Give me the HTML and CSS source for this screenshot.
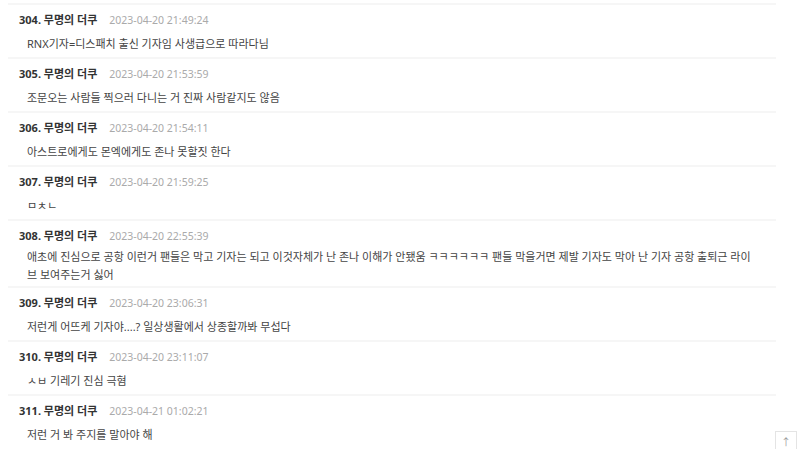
FILE: index.html
```html
<!DOCTYPE html>
<html lang="ko">
<head>
    <meta charset="UTF-8">
    <meta name="viewport" content="width=device-width, initial-scale=1.0">
    <title>댓글</title>
    <link rel="stylesheet" href="styles.css">
</head>
<body>
    <div class="comments">
        <div class="comment">
            <div class="comment-head"><span class="nick">304. 무명의 더쿠</span><span class="date">2023-04-20 21:49:24</span></div>
            <div class="comment-body">RNX기자=디스패치 출신 기자임 사생급으로 따라다님</div>
        </div>
        <div class="comment">
            <div class="comment-head"><span class="nick">305. 무명의 더쿠</span><span class="date">2023-04-20 21:53:59</span></div>
            <div class="comment-body">조문오는 사람들 찍으러 다니는 거 진짜 사람같지도 않음</div>
        </div>
        <div class="comment">
            <div class="comment-head"><span class="nick">306. 무명의 더쿠</span><span class="date">2023-04-20 21:54:11</span></div>
            <div class="comment-body">아스트로에게도 몬엑에게도 존나 못할짓 한다</div>
        </div>
        <div class="comment">
            <div class="comment-head"><span class="nick">307. 무명의 더쿠</span><span class="date">2023-04-20 21:59:25</span></div>
            <div class="comment-body">ㅁㅊㄴ</div>
        </div>
        <div class="comment">
            <div class="comment-head"><span class="nick">308. 무명의 더쿠</span><span class="date">2023-04-20 22:55:39</span></div>
            <div class="comment-body">애초에 진심으로 공항 이런거 팬들은 막고 기자는 되고 이것자체가 난 존나 이해가 안됐움 ㅋㅋㅋㅋㅋㅋ 팬들 막을거면 제발 기자도 막아 난 기자 공항 출퇴근 라이브 보여주는거 싫어</div>
        </div>
        <div class="comment">
            <div class="comment-head"><span class="nick">309. 무명의 더쿠</span><span class="date">2023-04-20 23:06:31</span></div>
            <div class="comment-body">저런게 어뜨케 기자야....? 일상생활에서 상종할까봐 무섭다</div>
        </div>
        <div class="comment">
            <div class="comment-head"><span class="nick">310. 무명의 더쿠</span><span class="date">2023-04-20 23:11:07</span></div>
            <div class="comment-body">ㅅㅂ 기레기 진심 극혐</div>
        </div>
        <div class="comment">
            <div class="comment-head"><span class="nick">311. 무명의 더쿠</span><span class="date">2023-04-21 01:02:21</span></div>
            <div class="comment-body">저런 거 봐 주지를 말아야 해</div>
        </div>
    </div>

    <a class="to-top" href="#">↑</a>
</body>
</html>
```

FILE: styles.css
```css
body {
    font-family: "Noto Sans", "Noto Sans CJK KR", sans-serif;
    background-color: #fff;
    color: #333;
    margin: 0;
    padding: 3px 24px 0 8px;
}

.comment {
    border-top: 2px solid #f6f6f6;
    padding: 6px 0 0 11px;
}

.comment-head {
    line-height: 18px;
    font-size: 11px;
}

.nick {
    font-weight: bold;
    color: #333;
}

.date {
    margin-left: 12px;
    color: #aaa;
    font-size: 10.5px;
}

/* short comments sit centred in a fixed-height row */
.comment-body {
    display: flex;
    align-items: center;
    box-sizing: border-box;
    min-height: 27px;
    margin-top: 1px;
    padding: 2px 18px 2px 8px;
    font-size: 11px;
    line-height: 18px;
    color: #444;
}

.to-top {
    position: fixed;
    right: 3px;
    bottom: -4px;
    width: 20px;
    height: 20px;
    border: 1px solid #e4e4e4;
    background-color: #fff;
    color: #999;
    font-size: 10px;
    text-align: center;
    line-height: 20px;
    text-decoration: none;
}
```
